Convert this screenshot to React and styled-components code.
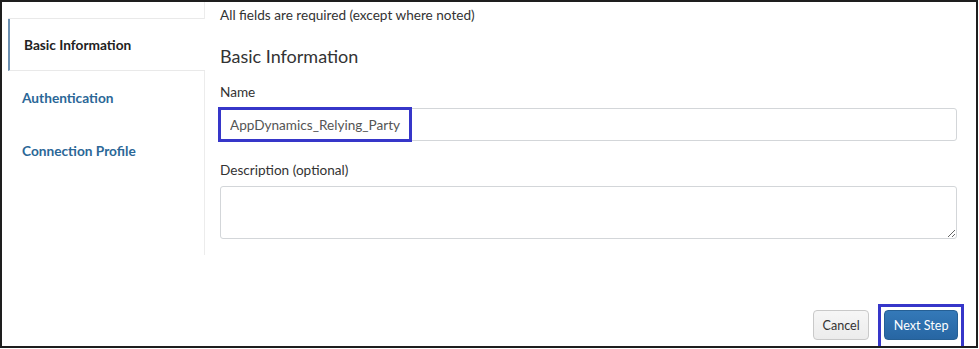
import React from "react";
import styled, { createGlobalStyle } from "styled-components";

const Global = createGlobalStyle`
  html, body { margin: 0; padding: 0; background: #fff; }
  body { font-family: Lato, "Open Sans", "Liberation Sans", sans-serif; }
  * { box-sizing: border-box; }
`;

const Frame = styled.div`
  width: 978px;
  height: 348px;
  border: 2px solid #1e1e1e;
  display: flex;
  flex-direction: column;
  background: #fff;
  overflow: hidden;
`;

const Main = styled.div`
  display: flex;
  align-items: flex-start;
`;

const Sidebar = styled.nav`
  width: 203px;
  height: 253px;
  padding-left: 6px;
  border-right: 1px solid #ececec;
  display: flex;
  flex-direction: column;
  flex-shrink: 0;
`;

const TopStub = styled.div`
  height: 17px;
  border-bottom: 1px solid #e9e9e9;
`;

const NavItem = styled.a`
  display: flex;
  align-items: center;
  height: 53px;
  padding-left: 14px;
  font-size: 13.7px;
  font-weight: 700;
  text-decoration: none;
  color: ${(p) => (p.$active ? "#222" : "#2b6797")};
  background: #fff;
  ${(p) =>
    p.$active
      ? `
    border-left: 2px solid #6c90b1;
    border-bottom: 1px solid #e9e9e9;
    margin-right: -1px;
    height: 52px;
  `
      : ""}
`;

const Content = styled.div`
  flex: 1;
  padding: 4px 19px 0 15px;
  color: #333;
`;

const Note = styled.div`
  font-size: 13.6px;
  line-height: 18px;
`;

const Heading = styled.h2`
  margin: 20px 0 0;
  font-size: 18px;
  font-weight: 400;
  line-height: 24px;
  color: #333;
`;

const Label = styled.label`
  display: block;
  font-size: 13.6px;
  line-height: 18px;
  margin-top: ${(p) => p.$top}px;
  color: #333;
`;

const FieldWrap = styled.div`
  position: relative;
  margin-top: 7px;
`;

const TextInput = styled.input`
  display: block;
  width: 100%;
  height: 33px;
  padding: 0 9px;
  border: 1px solid #d3d6d9;
  border-radius: 3px;
  font-family: inherit;
  font-size: 13.6px;
  color: #555;
  background: #fff;
  outline: none;
`;

const TextArea = styled.textarea`
  display: block;
  width: 100%;
  height: 53px;
  padding: 6px 9px;
  border: 1px solid #d3d6d9;
  border-radius: 3px;
  font-family: inherit;
  font-size: 13.6px;
  color: #555;
  resize: vertical;
  outline: none;
`;

const Callout = styled.div`
  position: absolute;
  left: -2px;
  top: -1px;
  width: 194px;
  height: 35px;
  border: 3px solid #3636c9;
  pointer-events: none;
`;

const Footer = styled.div`
  margin-top: auto;
  display: flex;
  justify-content: flex-end;
  align-items: flex-end;
  gap: 9px;
  padding: 0 12px 0 0;
`;

const Button = styled.button`
  height: 30px;
  padding: 0 8.5px;
  border-radius: 4px;
  font-family: inherit;
  font-size: 12.6px;
  cursor: pointer;
  border: 1px solid ${(p) => (p.$primary ? "#255f94" : "#c9c9c9")};
  color: ${(p) => (p.$primary ? "#fff" : "#333")};
  background: ${(p) =>
    p.$primary
      ? "linear-gradient(#3479b8, #2766a3)"
      : "linear-gradient(#f6f6f6, #ececec)"};
`;

const CancelSlot = styled.div`
  padding-bottom: 6px;
`;

const HighlightBox = styled.div`
  border: 3px solid #3636c9;
  border-bottom: none;
  padding: 3px 3px 6px 3px;
`;

export default function App() {
  return (
    <>
      <Global />
      <Frame>
        <Main>
          <Sidebar>
            <TopStub />
            <NavItem $active>Basic Information</NavItem>
            <NavItem>Authentication</NavItem>
            <NavItem>Connection Profile</NavItem>
          </Sidebar>
          <Content>
            <Note>All fields are required (except where noted)</Note>
            <Heading>Basic Information</Heading>
            <Label $top={15}>Name</Label>
            <FieldWrap>
              <TextInput defaultValue="AppDynamics_Relying_Party" />
              <Callout />
            </FieldWrap>
            <Label $top={20}>Description (optional)</Label>
            <FieldWrap>
              <TextArea />
            </FieldWrap>
          </Content>
        </Main>
        <Footer>
          <CancelSlot>
            <Button>Cancel</Button>
          </CancelSlot>
          <HighlightBox>
            <Button $primary>Next Step</Button>
          </HighlightBox>
        </Footer>
      </Frame>
    </>
  );
}
